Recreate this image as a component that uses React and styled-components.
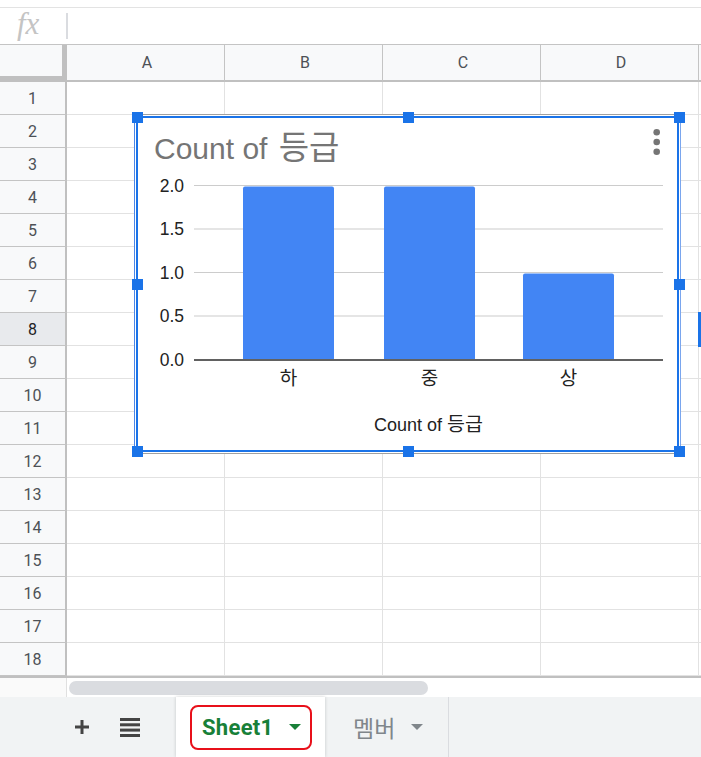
import React from 'react'
import styled, { createGlobalStyle } from 'styled-components'

const GlobalStyle = createGlobalStyle`
  html, body {
    margin: 0;
    padding: 0;
    background: #fff;
  }
  body {
    font-family: Roboto, "Noto Sans CJK KR", sans-serif;
  }
  * {
    box-sizing: border-box;
  }
`

const Page = styled.div`
  width: 701px;
  height: 757px;
  overflow: hidden;
  display: flex;
  flex-direction: column;
  background: #fff;
`

const TopGap = styled.div`
  height: 8px;
  border-bottom: 1px solid #e3e3e3;
`

const FormulaBar = styled.div`
  height: 36px;
  display: flex;
  align-items: center;
  padding-left: 17px;
  gap: 20px;
`

const Fx = styled.span`
  width: 29px;
  font-family: "Liberation Serif", serif;
  font-style: italic;
  font-size: 31px;
  line-height: 1;
  color: #c4c4c4;
  margin-top: -5px;
`

const Divider = styled.span`
  width: 2px;
  height: 26px;
  background: #dadce0;
`

const Sheet = styled.div`
  position: relative;
`

const Grid = styled.div`
  display: grid;
  grid-template-columns: 67px repeat(4, 158px) 1fr;
  grid-template-rows: 37px repeat(18, 33px);
  border-top: 1px solid #c4c4c4;
`

const Corner = styled.div`
  background: #f8f9fa;
  border-right: 5px solid #c0c0c0;
  border-bottom: 6px solid #c0c0c0;
`

const ColHead = styled.div`
  background: #f8f9fa;
  border-right: 1px solid #c4c4c4;
  border-bottom: 2px solid #c0c0c0;
  display: flex;
  align-items: center;
  justify-content: center;
  padding-left: 3px;
  font-size: 16px;
  color: #4d5156;
`

const RowHead = styled.div`
  background: ${p => (p.$active ? '#e8eaed' : '#f8f9fa')};
  border-right: 2px solid #c0c0c0;
  border-bottom: 1px solid #c4c4c4;
  display: flex;
  align-items: center;
  justify-content: center;
  font-size: 16px;
  color: ${p => (p.$active ? '#202124' : '#4d5156')};
`

const Cell = styled.div`
  border-right: ${p => (p.$last ? 'none' : '1px solid #e2e2e2')};
  border-bottom: 1px solid #e2e2e2;
  background: #fff;
`

const SelectedEdge = styled.div`
  position: absolute;
  left: 698px;
  top: 268px;
  width: 3px;
  height: 35px;
  background: #1a73e8;
`

const ScrollRow = styled.div`
  height: 21px;
  border-top: 2px solid #c0c0c0;
  display: grid;
  grid-template-columns: 67px 1fr;
`

const ScrollCorner = styled.div`
  border-right: 1px solid #e0e0e0;
  background: #fafafa;
`

const ScrollTrack = styled.div`
  padding: 3px 0 0 2px;
`

const Thumb = styled.div`
  width: 359px;
  height: 14px;
  border-radius: 7px;
  background: #dadce0;
`

const TabBar = styled.div`
  height: 60px;
  background: #f1f3f4;
  display: flex;
  align-items: stretch;
  padding-left: 66px;
`

const IconButton = styled.div`
  width: 32px;
  display: flex;
  align-items: center;
  justify-content: center;
  margin-right: 16px;
  color: #5f6368;
`

const Tab = styled.div`
  width: ${p => p.$w}px;
  display: flex;
  align-items: center;
  background: ${p => (p.$active ? '#fff' : 'transparent')};
  box-shadow: ${p => (p.$active ? '0 0 3px rgba(60, 64, 67, 0.25)' : 'none')};
  border-right: ${p => (p.$active ? 'none' : '1px solid #dadce0')};
  padding-left: ${p => p.$pad}px;
  margin-left: ${p => p.$ml || 0}px;
  font-size: 22px;
  z-index: ${p => (p.$active ? 1 : 0)};
`

const Highlight = styled.div`
  width: 122px;
  height: 45px;
  border: 2px solid #e8101a;
  border-radius: 8px;
  display: flex;
  align-items: center;
  padding-left: 10px;
  gap: 15px;
`

const TabLabel = styled.span`
  color: ${p => p.$color};
  font-weight: ${p => (p.$bold ? 700 : 400)};
  font-size: ${p => p.$size || 22}px;
  letter-spacing: ${p => (p.$bold ? '0.3px' : '0')};
`

const Caret = styled.span`
  width: 0;
  height: 0;
  border-left: 6px solid transparent;
  border-right: 6px solid transparent;
  border-top: 6px solid ${p => p.$color};
  margin-left: ${p => p.$ml || 0}px;
`

const ChartFrame = styled.div`
  position: absolute;
  left: 134px;
  top: 70px;
  width: 547px;
  height: 340px;
  background: #fff;
  border-style: solid;
  border-width: 1px;
  border-color: #a0a0a0 #7aa6ee #a0a0a0 #4a86e8;
  box-shadow: inset 0 0 0 1px #fff, inset 0 0 0 3px #1a73e8;
`

const ChartSvg = styled.svg`
  position: absolute;
  left: 0;
  top: 0;
  display: block;
`

const Handle = styled.div`
  position: absolute;
  left: ${p => p.$x - 5.5 - 135}px;
  top: ${p => p.$y - 5.5 - 115}px;
  width: 11px;
  height: 11px;
  background: #1a73e8;
`

const cols = ['A', 'B', 'C', 'D']
const rows = Array.from({ length: 18 }, (_, i) => i + 1)

const bars = [
  { label: '하', x: 243, value: 2 },
  { label: '중', x: 384, value: 2 },
  { label: '상', x: 523, value: 1 },
]

const ticks = [2, 1.5, 1, 0.5, 0]
const zeroY = 359.5
const unit = 87
const chartFont = '"Liberation Sans", Arial, "Noto Sans CJK KR", sans-serif'

const handles = [
  [137, 117], [408, 117], [679, 117],
  [137, 284], [679, 284],
  [137, 451], [408, 451], [679, 451],
]

function barPath(x, top, w, bottom) {
  const r = 2
  return `M${x},${bottom} V${top + r} Q${x},${top} ${x + r},${top} H${x + w - r} Q${x + w},${top} ${x + w},${top + r} V${bottom} Z`
}

const Chart = () => (
  <ChartFrame>
    <ChartSvg width="545" height="338" viewBox="135 115 545 338">
      <text x="154" y="158.5" fontFamily={chartFont} fontSize="30" fill="#757575">
        Count of <tspan fontSize="33" dx="3">등급</tspan>
      </text>
      <circle cx="656.7" cy="132.3" r="3.3" fill="#757575" />
      <circle cx="656.7" cy="142" r="3.3" fill="#757575" />
      <circle cx="656.7" cy="151.7" r="3.3" fill="#757575" />
      {ticks.map(t => {
        const y = zeroY - t * unit
        return (
          <g key={t}>
            {t > 0 && <line x1="194" x2="663" y1={y} y2={y} stroke="#cccccc" strokeWidth="1.2" />}
            <text x="184" y={y + 6} textAnchor="end" fontFamily={chartFont} fontSize="17.5" fill="#222">
              {t.toFixed(1)}
            </text>
          </g>
        )
      })}
      {bars.map(b => (
        <g key={b.label}>
          <path d={barPath(b.x, zeroY - b.value * unit + 1, 91, zeroY)} fill="#4285f4" />
          <text x={b.x + 45.5} y="384.5" textAnchor="middle" fontFamily={chartFont} fontSize="19" fill="#222">
            {b.label}
          </text>
        </g>
      ))}
      <line x1="194" x2="663" y1={zeroY + 0.5} y2={zeroY + 0.5} stroke="#616161" strokeWidth="2" />
      <text x="428.5" y="431" textAnchor="middle" fontFamily={chartFont} fontSize="18" fill="#222">
        Count of <tspan fontSize="19.5">등급</tspan>
      </text>
    </ChartSvg>
    {handles.map(([x, y]) => (
      <Handle key={`${x}-${y}`} $x={x} $y={y} />
    ))}
  </ChartFrame>
)

const App = () => {
  return (
    <>
      <GlobalStyle />
      <Page>
        <TopGap />
        <FormulaBar>
          <Fx>fx</Fx>
          <Divider />
        </FormulaBar>
        <Sheet>
          <Grid>
            <Corner />
            {cols.map(c => (
              <ColHead key={c}>{c}</ColHead>
            ))}
            <ColHead />
            {rows.map(r => (
              <React.Fragment key={r}>
                <RowHead $active={r === 8}>{r}</RowHead>
                {cols.map(c => (
                  <Cell key={c} />
                ))}
                <Cell $last />
              </React.Fragment>
            ))}
          </Grid>
          <SelectedEdge />
          <Chart />
        </Sheet>
        <ScrollRow>
          <ScrollCorner />
          <ScrollTrack>
            <Thumb />
          </ScrollTrack>
        </ScrollRow>
        <TabBar>
          <IconButton>
            <svg width="16" height="16" viewBox="0 0 16 16">
              <path d="M8 1v14M1 8h14" stroke="#444" strokeWidth="3" />
            </svg>
          </IconButton>
          <IconButton>
            <svg width="20" height="19" viewBox="0 0 20 19">
              <rect x="0" y="0" width="20" height="3" fill="#444" />
              <rect x="0" y="5.3" width="20" height="3" fill="#444" />
              <rect x="0" y="10.6" width="20" height="3" fill="#444" />
              <rect x="0" y="16" width="20" height="3" fill="#444" />
            </svg>
          </IconButton>
          <Tab $active $w={149} $pad={14} $ml={14}>
            <Highlight>
              <TabLabel $color="#188038" $bold>Sheet1</TabLabel>
              <Caret $color="#188038" />
            </Highlight>
          </Tab>
          <Tab $w={124} $pad={28}>
            <TabLabel $color="#80868b" $size={23}>멤버</TabLabel>
            <Caret $color="#80868b" $ml={16} />
          </Tab>
        </TabBar>
      </Page>
    </>
  )
}

export default App
